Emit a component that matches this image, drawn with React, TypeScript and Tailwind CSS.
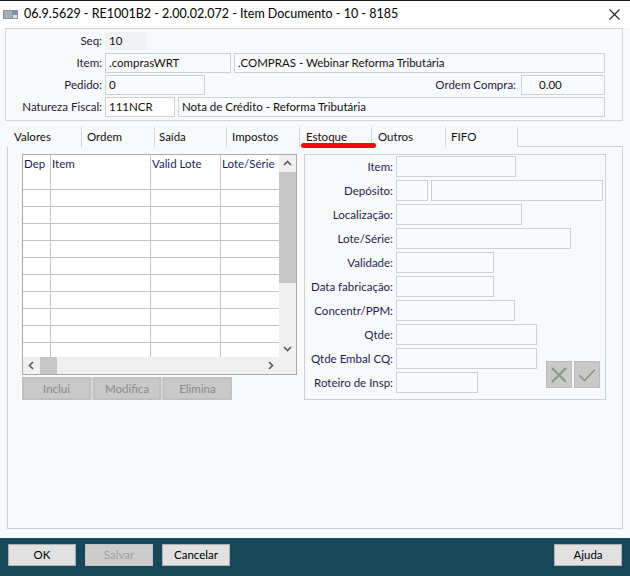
import React from "react";

const FONT = "font-['Lato','Noto_Sans',sans-serif]";

const GRID_ROWS = Array.from({ length: 11 }, (_, i) => i);

const TABS = [
  { label: "Valores", w: "w-[75px] pl-[7px]" },
  { label: "Ordem", w: "w-[73px] pl-[5px]" },
  { label: "Saída", w: "w-[72px] pl-[4px]" },
  { label: "Impostos", w: "w-[73px] pl-[5px]" },
  { label: "Estoque", w: "w-[72px] pl-[6px]", active: true },
  { label: "Outros", w: "w-[74px] pl-[6px]" },
  { label: "FIFO", w: "w-[72px] pl-[5px]" },
];

function Chevron({ dir }: { dir: "up" | "down" | "left" | "right" }) {
  const pts = {
    up: "1,5 4.5,1.5 8,5",
    down: "1,2 4.5,5.5 8,2",
    left: "5,1 1.5,4.5 5,8",
    right: "2,1 5.5,4.5 2,8",
  }[dir];
  const size = dir === "up" || dir === "down" ? { w: 9, h: 7 } : { w: 7, h: 9 };
  return (
    <svg width={size.w} height={size.h} viewBox={`0 0 ${size.w} ${size.h}`}>
      <polyline points={pts} fill="none" stroke="#5a5a5a" strokeWidth="1.6" />
    </svg>
  );
}

function Field({ w, children, className = "" }: { w: string; children?: React.ReactNode; className?: string }) {
  return (
    <div className={`${w} h-full border border-[#cdd0d4] bg-[#f9fafb] flex items-center pl-[3px] text-[#111] ${className}`}>
      {children}
    </div>
  );
}

function HeadRow({ label, children }: { label: string; children: React.ReactNode }) {
  return (
    <div className="flex items-center gap-[3px] h-[20px]">
      <span className="w-[96px] text-right text-[#1f2140]">{label}</span>
      {children}
    </div>
  );
}

function StockRow({ label, children }: { label: string; children: React.ReactNode }) {
  return (
    <div className="flex items-center gap-[3px] h-[21px]">
      <span className="w-[88px] text-right text-[#1d1f4e]">{label}</span>
      {children}
    </div>
  );
}

export default function App() {
  return (
    <div className={`w-[630px] h-[576px] flex flex-col bg-[#f8f9fb] text-[11.5px] leading-none ${FONT}`}>
      {/* barra de título */}
      <div className="h-[28px] bg-white border-t border-[#1a1a1a] flex items-center pl-[3px] pr-[10px]">
        <svg width="15" height="9" viewBox="0 0 15 9">
          <rect x="0" y="0" width="15" height="9" fill="#8b9097" />
          <rect x="1" y="1" width="8" height="7" fill="#a9aeb4" />
          <rect x="10" y="1" width="4" height="3" fill="#6f93b8" />
          <rect x="10" y="5" width="4" height="3" fill="#dfe6ee" />
        </svg>
        <span className="ml-[6px] text-[12.5px] text-black">
          06.9.5629 - RE1001B2 - 2.00.02.072 - Item Documento - 10 - 8185
        </span>
        <svg className="ml-auto" width="11" height="11" viewBox="0 0 11 11">
          <path d="M0.5 0.5 L10.5 10.5 M10.5 0.5 L0.5 10.5" stroke="#222" strokeWidth="1.1" />
        </svg>
      </div>

      {/* cabeçalho */}
      <div className="ml-[5px] w-[618px] h-[93px] border border-[#d4d6da] pt-[2px] pr-[17px] flex flex-col gap-[2px]">
        <HeadRow label="Seq:">
          <div className="w-[41px] h-[18px] bg-[#f1f2f4] flex items-center pl-[4px] text-[#111]">10</div>
        </HeadRow>
        <HeadRow label="Item:">
          <Field w="w-[126px]">.comprasWRT</Field>
          <Field w="w-[371px]">.COMPRAS - Webinar Reforma Tributária</Field>
        </HeadRow>
        <HeadRow label="Pedido:">
          <Field w="w-[100px]">0</Field>
          <span className="ml-auto mr-[2px] text-[#1f2140]">Ordem Compra:</span>
          <Field w="w-[84px]" className="pl-[17px]">0.00</Field>
        </HeadRow>
        <HeadRow label="Natureza Fiscal:">
          <Field w="w-[70px]" className="border-[#7a7a7a] bg-white">111NCR</Field>
          <Field w="w-[427px]">Nota de Crédito - Reforma Tributária</Field>
        </HeadRow>
      </div>

      {/* abas */}
      <div className="mt-[6px] mx-[7px] h-[20px] flex">
        {TABS.map(t => (
          <div key={t.label} className={`relative ${t.w} h-full border-r border-[#d3d5d8] flex items-center text-[#111]`}>
            <span className={t.active ? "underline underline-offset-2" : ""}>{t.label}</span>
            {t.active && <div className="absolute left-[1px] -bottom-[1px] w-[75px] h-[5px] rounded-full bg-[#f50a0a]" />}
          </div>
        ))}
        <div className="flex-1 border-b border-[#cdd0d4]" />
      </div>

      {/* painel Estoque */}
      <div className="mx-[7px] h-[382px] border-x border-b border-[#cdd0d4] pt-[7px] pl-[14px] flex gap-[7px]">
        <div className="flex flex-col">
          <div className="w-[275px] h-[221px] border border-[#a9a9a9] bg-white flex flex-col">
            <div className="h-[202px] flex">
              <div className="w-[256px] h-full overflow-hidden">
                <div className="h-[18px] flex text-[#1b1d5c]">
                  <div className="w-[28px] border-r border-[#c4c4c4] pl-[1px] flex items-center">Dep</div>
                  <div className="w-[100px] border-r border-[#c4c4c4] pl-[1px] flex items-center">Item</div>
                  <div className="w-[70px] border-r border-[#c4c4c4] pl-[1px] flex items-center">Valid Lote</div>
                  <div className="flex-1 pl-[1px] flex items-center">Lote/Série</div>
                </div>
                {GRID_ROWS.map(r => (
                  <div key={r} className="h-[17px] flex border-b border-[#c4c4c4]">
                    <div className="w-[28px] border-r border-[#c4c4c4]" />
                    <div className="w-[100px] border-r border-[#c4c4c4]" />
                    <div className="w-[70px] border-r border-[#c4c4c4]" />
                    <div className="flex-1" />
                  </div>
                ))}
              </div>
              <div className="w-[17px] h-full bg-[#f0f0f0] flex flex-col">
                <div className="h-[17px] flex items-center justify-center"><Chevron dir="up" /></div>
                <div className="h-[111px] bg-[#c6c6c6]" />
                <div className="flex-1" />
                <div className="h-[17px] flex items-center justify-center"><Chevron dir="down" /></div>
              </div>
            </div>
            <div className="h-[17px] flex bg-[#f0f0f0]">
              <div className="w-[17px] flex items-center justify-center"><Chevron dir="left" /></div>
              <div className="w-[17px] bg-[#c6c6c6]" />
              <div className="flex-1" />
              <div className="w-[17px] flex items-center justify-center"><Chevron dir="right" /></div>
              <div className="w-[17px]" />
            </div>
          </div>
          <div className="mt-[2px] h-[23px] w-fit flex gap-[2px] bg-[#d6d6d6] text-[#8b8b8b]">
            <div className="w-[69px] bg-[#c9c9c9] border-2 border-[#c1c1c1] flex items-center justify-center">Inclui</div>
            <div className="w-[68px] bg-[#c9c9c9] border-2 border-[#c1c1c1] flex items-center justify-center">Modifica</div>
            <div className="w-[69px] bg-[#c9c9c9] border-2 border-[#c1c1c1] flex items-center justify-center">Elimina</div>
          </div>
        </div>

        <div className="w-[302px] h-[246px] border border-[#cdd0d4] pt-[1px] flex flex-col gap-[3px]">
          <StockRow label="Item:"><Field w="w-[120px]" /></StockRow>
          <StockRow label="Depósito:">
            <Field w="w-[32px]" />
            <Field w="w-[172px]" />
          </StockRow>
          <StockRow label="Localização:"><Field w="w-[126px]" /></StockRow>
          <StockRow label="Lote/Série:"><Field w="w-[175px]" /></StockRow>
          <StockRow label="Validade:"><Field w="w-[98px]" /></StockRow>
          <StockRow label="Data fabricação:"><Field w="w-[98px]" /></StockRow>
          <StockRow label="Concentr/PPM:"><Field w="w-[119px]" /></StockRow>
          <StockRow label="Qtde:"><Field w="w-[141px]" /></StockRow>
          <div className="flex">
            <div className="flex flex-col gap-[3px]">
              <StockRow label="Qtde Embal CQ:"><Field w="w-[141px]" /></StockRow>
              <StockRow label="Roteiro de Insp:"><Field w="w-[82px]" /></StockRow>
            </div>
            <div className="ml-auto mr-[5px] mb-[5px] self-end flex gap-[2px]">
              <div className="w-[26px] h-[27px] bg-[#c9c9c9] border border-[#bcbcbc] flex items-center justify-center">
                <svg width="16" height="16" viewBox="0 0 16 16">
                  <path d="M1 1 L15 15 M15 1 L1 15" stroke="#8d9887" strokeWidth="2" />
                </svg>
              </div>
              <div className="w-[26px] h-[27px] bg-[#c9c9c9] border border-[#bcbcbc] flex items-center justify-center">
                <svg width="18" height="14" viewBox="0 0 18 14">
                  <polyline points="1,7 6.5,12.5 17,1.5" fill="none" stroke="#8d9887" strokeWidth="1.6" />
                </svg>
              </div>
            </div>
          </div>
        </div>
      </div>

      {/* rodapé */}
      <div className="mt-[9px] h-[38px] bg-[#174859] flex items-start pt-[6px] px-[8px] gap-[9px]">
        <div className="w-[68px] h-[22px] bg-[#e1e1e1] border border-[#adadad] flex items-center justify-center text-black">OK</div>
        <div className="w-[68px] h-[22px] bg-[#cccccc] border border-[#bfbfbf] flex items-center justify-center text-[#a0a0a0]">Salvar</div>
        <div className="w-[68px] h-[22px] bg-[#e1e1e1] border border-[#adadad] flex items-center justify-center text-black">Cancelar</div>
        <div className="ml-auto w-[68px] h-[22px] bg-[#e1e1e1] border border-[#adadad] flex items-center justify-center text-black">Ajuda</div>
      </div>
    </div>
  );
}
